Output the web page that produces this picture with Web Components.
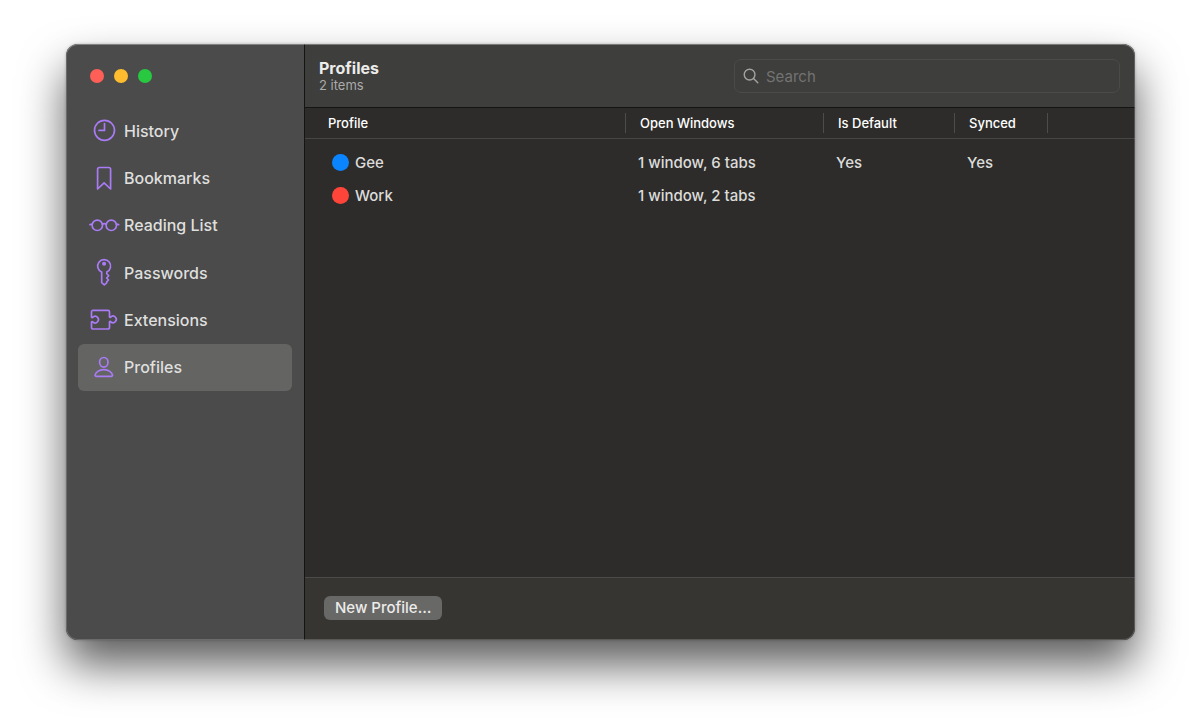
<!DOCTYPE html>
<html lang="en">
<head>
<meta charset="utf-8">
<title>Profiles</title>
<style>
  html { background: #fff; }
  body {
    margin: 0;
    box-sizing: border-box;
    min-height: 100vh;
    padding: 44px 65px 87px 66px;
    display: flex;
    font-family: Inter, "Liberation Sans", sans-serif;
    font-size: 15px;
    line-height: 20px;
    color: #dfdfde;
  }
</style>
</head>
<body>
<app-window>
  <side-bar slot="side">
    <side-item icon="history">History</side-item>
    <side-item icon="bookmark">Bookmarks</side-item>
    <side-item icon="glasses">Reading List</side-item>
    <side-item icon="key">Passwords</side-item>
    <side-item icon="puzzle">Extensions</side-item>
    <side-item icon="person" selected>Profiles</side-item>
  </side-bar>
  <tool-bar heading="Profiles" detail="2 items"></tool-bar>
  <profile-table></profile-table>
  <bottom-bar>New Profile…</bottom-bar>
</app-window>
<script>
const icons = {
  history: '<circle cx="15.500" cy="15.300" r="10"/><path d="M15.500 8.500v6.900h-5.500"/>',
  bookmark: '<path d="M8.600 27V7.300a1.800 1.800 0 0 1 1.800-1.800h9.400a1.800 1.800 0 0 1 1.800 1.800V27l-6.500-6.200z"/>',
  glasses: '<circle cx="8.300" cy="16.300" r="5.200"/><circle cx="22.300" cy="16.300" r="5.200"/><path d="M13.300 15.200q2-1 4 0M1 15.700l2.200-.5M29.600 15.700l-2.200-.5"/>',
  key: '<path d="M12.700 15.100a6.500 6.500 0 1 1 5.100-.1v1.700l1.900 2.100-2 2.200 1.800 2-1.800 1.900v.9l-2.400 2-2.600-2.200z"/><circle cx="15.100" cy="6.700" r="1.200" fill="currentColor"/>',
  puzzle: '<path d="M4 6.300h15a1.500 1.500 0 0 1 1.500 1.500v4.700c0 1.300 1 .9 1.700.1a3.300 3.300 0 1 1 0 5.600c-.7-.8-1.700-1.200-1.700.1v5.200a1.500 1.500 0 0 1-1.500 1.500H4a1.500 1.500 0 0 1-1.500-1.500v-5c0-1.300 1-.9 1.700-.2a3.300 3.300 0 1 0 0-5.400c-.7.800-1.700 1.200-1.700-.1v-5A1.500 1.500 0 0 1 4 6.300z"/>',
  person: '<ellipse cx="14.800" cy="11.300" rx="4.200" ry="4.800"/><path d="M7.200 25.300c-.8 0-1.200-.4-1.100-1.100.5-2.800 3.700-5.500 8.700-5.500s8.200 2.700 8.700 5.500c.1.700-.3 1.100-1.100 1.100z"/>'
};

function define(name, markup, setup) {
  const template = document.createElement('template');
  template.innerHTML = markup;
  customElements.define(name, class extends HTMLElement {
    connectedCallback() {
      if (this.shadowRoot) return;
      const root = this.attachShadow({ mode: 'open' });
      root.append(template.content.cloneNode(true));
      if (setup) setup(this, root);
    }
  });
}

define('app-window', `
  <style>
    :host {
      flex: 1; display: flex; min-width: 0; box-sizing: border-box;
      border-radius: 12px;
      background: #2d2c2a;
      box-shadow: 0 25px 45px rgba(0,0,0,.64), 0 0 3px rgba(0,0,0,.25);
      position: relative;
    }
    /* light rim drawn over the panes */
    :host::after {
      content: ""; position: absolute; inset: 0; border-radius: 12px;
      pointer-events: none;
      box-shadow: inset 0 0 0 1px rgba(255,255,255,.18), inset 0 1px 0 rgba(255,255,255,.16);
    }
    .side { display: flex; flex: none; }
    main { flex: 1; min-width: 0; display: flex; flex-direction: column;
      overflow: hidden; border-radius: 0 12px 12px 0; }
  </style>
  <div class="side"><slot name="side"></slot></div>
  <main><slot></slot></main>
`);

define('side-bar', `
  <style>
    :host { display: flex; flex-direction: column; box-sizing: border-box; width: 239px;
      padding: 24px 12px 24px 12px; background: #4b4b4b; border-right: 1px solid #151514;
      border-radius: 12px 0 0 12px; }
    .lights { display: flex; gap: 10px; padding: 1px 12px 0; height: 38px; }
    .lights button { width: 14px; height: 14px; border: 0; padding: 0; border-radius: 50%; }
    .close { background: #ff5f57; } .min { background: #febc2e; } .zoom { background: #28c840; }
    nav { display: grid; grid-auto-rows: 1fr; height: 284px; }
  </style>
  <div class="lights">
    <button class="close" aria-label="Close"></button>
    <button class="min" aria-label="Minimize"></button>
    <button class="zoom" aria-label="Zoom"></button>
  </div>
  <nav><slot></slot></nav>
`);

define('side-item', `
  <style>
    :host { display: flex; font-size: 16px; font-weight: 500; }
    a { flex: 1; display: flex; align-items: center; gap: 3px; padding-left: 11px;
      border-radius: 6px; color: inherit; text-decoration: none; }
    :host([selected]) a { background: #646463; }
    svg { width: 32px; height: 32px; flex: none; fill: none; color: #a97bf5; stroke: currentColor;
      stroke-width: 1.7; stroke-linecap: round; stroke-linejoin: round; }
  </style>
  <a href="#"><svg viewBox="0 0 32 32" aria-hidden="true"></svg><span><slot></slot></span></a>
`, (host, root) => {
  root.querySelector('svg').innerHTML = icons[host.getAttribute('icon')];
});

define('tool-bar', `
  <style>
    :host { display: flex; justify-content: space-between; align-items: center; box-sizing: border-box;
      height: 64px; padding: 1px 15px 0 14px; background: #3e3e3c; border-bottom: 1px solid #151514; }
    h1 { margin: 0; font-size: 16px; line-height: 18px; font-weight: 700; color: #ececeb; }
    p { margin: 0; font-size: 13px; line-height: 17px; color: #ababaa; }
    label { display: flex; align-items: center; gap: 7px; box-sizing: border-box; width: 386px; height: 34px;
      padding: 0 8px; border: 1px solid #4b4b49; border-radius: 7px; }
    svg { width: 16px; height: 16px; flex: none; fill: none; stroke: #a2a2a1; stroke-width: 1.5; stroke-linecap: round; }
    input { flex: 1; min-width: 0; border: 0; padding: 2px 0 0; background: none; outline: 0; font: inherit; color: inherit; }
    input::placeholder { color: #737372; opacity: 1; }
  </style>
  <div><h1></h1><p></p></div>
  <label>
    <svg viewBox="0 0 17 17" aria-hidden="true"><circle cx="7" cy="7" r="5.700"/><path d="M11.200 11.200l4.500 4.500"/></svg>
    <input type="search" placeholder="Search" aria-label="Search">
  </label>
`, (host, root) => {
  root.querySelector('h1').textContent = host.getAttribute('heading');
  root.querySelector('p').textContent = host.getAttribute('detail');
});

define('profile-table', `
  <style>
    :host { display: block; flex: 1; }
    table { width: 100%; table-layout: fixed; border-collapse: separate; border-spacing: 0; }
    .name { width: 321px; } .open { width: 198px; } .default { width: 131px; } .sync { width: 93px; }
    th { height: 30px; padding: 0; text-align: left; font-size: 13px; font-weight: 500; color: #fff;
      border-bottom: 1px solid #464644; }
    th span { display: block; padding-left: 14px; line-height: 20px; border-right: 1px solid #4c4c4a; }
    th:first-child span { padding-left: 23px; }
    td { height: 33px; padding: 0 0 0 12px; color: #dcdcdb; white-space: nowrap; font-weight: 500; }
    td:first-child { padding-left: 27px; }
    tbody::before { content: ""; display: table-row; height: 7px; }
    .who { display: flex; align-items: center; gap: 6px; }
    i { width: 17px; height: 17px; border-radius: 50%; }
    .blue { background: #0a84ff; } .red { background: #ff453a; }
  </style>
  <table>
    <colgroup><col class="name"><col class="open"><col class="default"><col class="sync"><col></colgroup>
    <thead><tr><th><span>Profile</span></th><th><span>Open Windows</span></th><th><span>Is Default</span></th><th><span>Synced</span></th><th></th></tr></thead>
    <tbody>
      <tr><td><div class="who"><i class="blue"></i>Gee</div></td><td>1 window, 6 tabs</td><td>Yes</td><td>Yes</td><td></td></tr>
      <tr><td><div class="who"><i class="red"></i>Work</div></td><td>1 window, 2 tabs</td><td></td><td></td><td></td></tr>
    </tbody>
  </table>
`);

define('bottom-bar', `
  <style>
    :host { display: flex; align-items: center; box-sizing: border-box; height: 63px; padding: 0 19px 2px;
      background: #363532; border-top: 1px solid #4a4a48; }
    button { font: inherit; font-weight: 500; line-height: 24px; height: 24px; padding: 0 11px; border: 0; border-radius: 6px;
      color: #ececeb; background: #686866; }
  </style>
  <button type="button"><slot></slot></button>
`);
</script>
</body>
</html>
